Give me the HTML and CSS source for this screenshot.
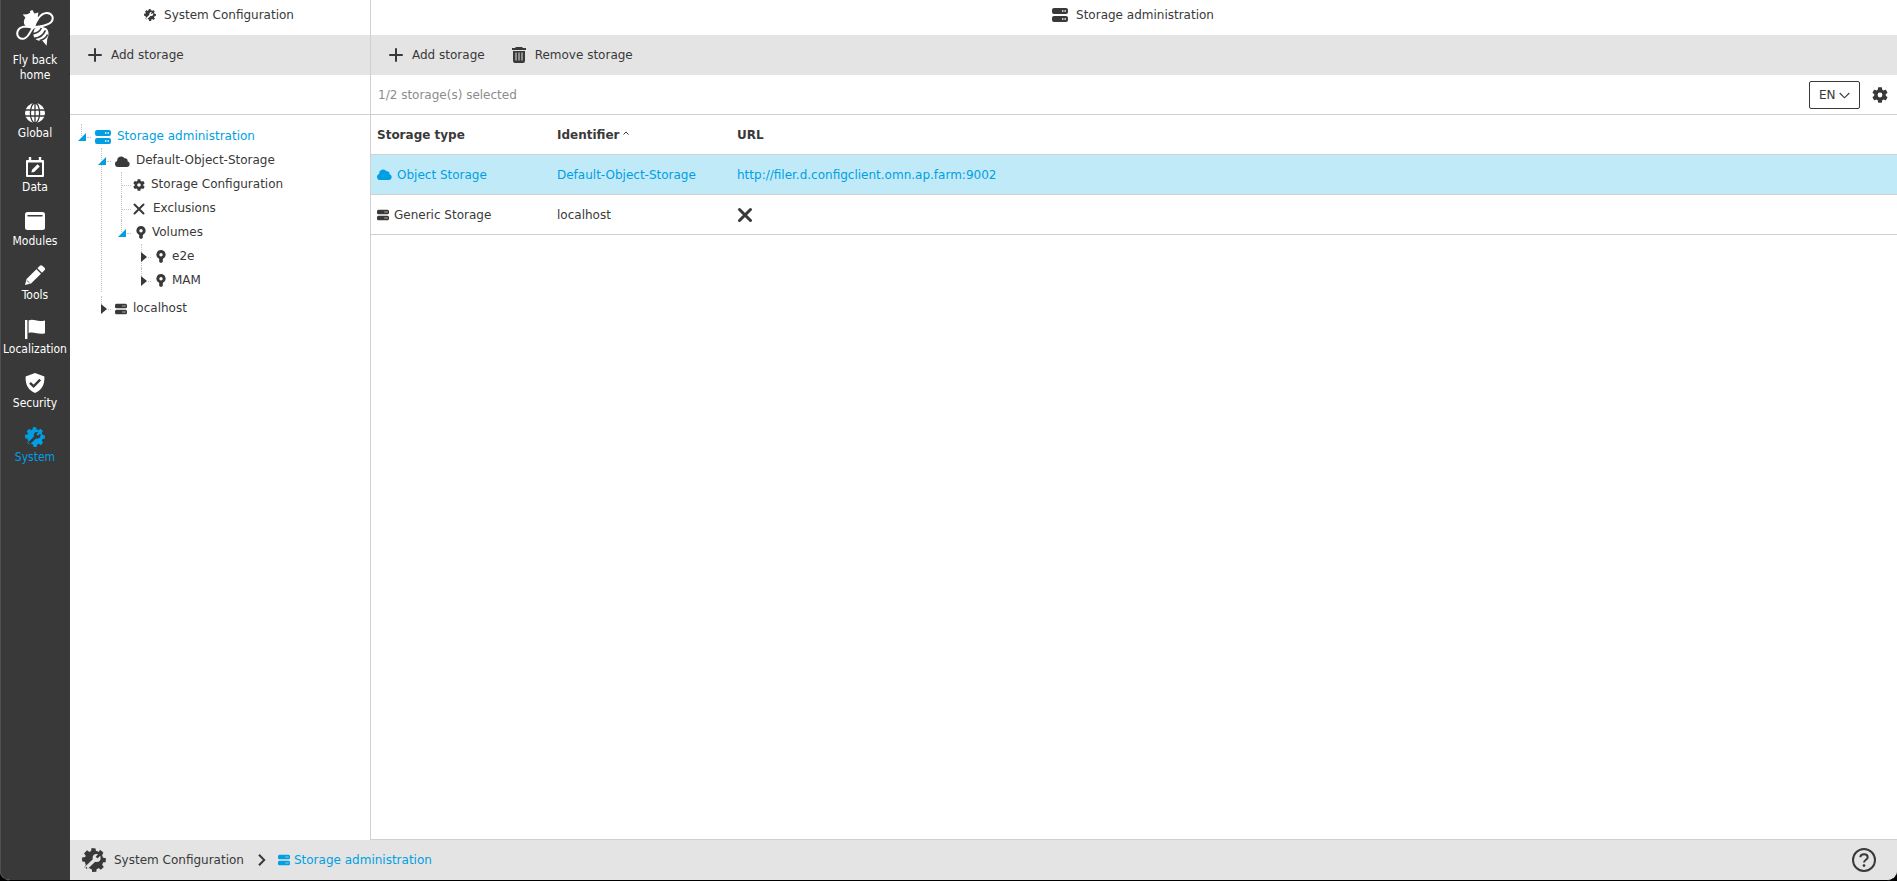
FILE: index.html
```html
<!DOCTYPE html>
<html lang="en">
<head>
    <meta charset="UTF-8">
    <title>Storage administration</title>
    <meta name="viewport" content="width=device-width, initial-scale=1.0">
    <link rel="stylesheet" href="styles.css">
</head>
<body>
    <!-- Icon sprite -->
    <svg class="sprite" aria-hidden="true">
        <defs>
            <mask id="wrench-mask">
                <rect width="24" height="24" fill="#fff"/>
                <path d="M3.6 20.6L13.6 11" stroke="#000" stroke-width="3.4" stroke-linecap="round" fill="none"/>
                <circle cx="14.6" cy="10" r="4" fill="#000"/>
                <path d="M14.6 9.6L19 5" stroke="#fff" stroke-width="2.6" fill="none"/>
                <circle cx="4.4" cy="19.9" r=".8" fill="#fff"/>
            </mask>
            <symbol id="i-system" viewBox="0 0 24 24">
                <g mask="url(#wrench-mask)">
                    <circle cx="12" cy="12" r="9.4" fill="currentColor"/>
                    <path d="M9.6 0l4 .6.4 4-5.200-.4zM18 1.800l3.400 2.800-1.600 3.400-3.600-3zM20.400 9.400l3.600.8-.4 4-3.600.2zM19.600 16l2.200 3-3 2.800-2.800-2.400zM14.600 20l-.2 3.800-4.200.2-.6-3.600zM8 19l-3.200 2.600-2.600-2.200L4.400 16zM4 14l-3.800-.6-.2-4 3.800-.4zM4.400 8.600L2 5.400 5 2.200l3 2.200z" fill="currentColor"/>
                </g>
            </symbol>
            <symbol id="i-gear" viewBox="2 2 20 20">
                <path fill="currentColor" fill-rule="evenodd" d="M19.140 12.940c.04-.3.06-.61.06-.94 0-.32-.02-.64-.07-.94l2.030-1.580c.18-.14.23-.41.12-.61l-1.920-3.320c-.12-.22-.37-.29-.59-.22l-2.390.96c-.5-.38-1.030-.7-1.620-.94l-.36-2.540c-.04-.24-.24-.41-.48-.41h-3.840c-.24 0-.43.17-.47.41l-.36 2.540c-.59.24-1.130.57-1.620.94l-2.390-.96c-.22-.08-.47 0-.59.22L2.740 8.870c-.12.21-.08.47.12.61l2.030 1.580c-.05.3-.09.63-.09.94s.02.64.07.94l-2.030 1.580c-.18.14-.23.41-.12.61l1.920 3.320c.12.22.37.29.59.22l2.390-.96c.5.38 1.030.7 1.620.94l.36 2.540c.05.24.24.41.48.41h3.840c.24 0 .44-.17.47-.41l.36-2.540c.59-.24 1.130-.56 1.620-.94l2.390.96c.22.08.47 0 .59-.22l1.920-3.320c.12-.22.07-.47-.12-.61zM12 9a3 3 0 1 0 0 6a3 3 0 1 0 0-6z"/>
            </symbol>
            <symbol id="i-storage" viewBox="0 0 16 14">
                <path fill="currentColor" fill-rule="evenodd" d="M2 0h12a2 2 0 0 1 2 2v2a2 2 0 0 1-2 2H2a2 2 0 0 1-2-2V2a2 2 0 0 1 2-2zM10 2.300v1.400h1.400V2.300zM12.500 2.300v1.400h1.400V2.300zM2 8h12a2 2 0 0 1 2 2v2a2 2 0 0 1-2 2H2a2 2 0 0 1-2-2v-2a2 2 0 0 1 2-2zM10 10.300v1.400h1.400v-1.400zM12.500 10.300v1.400h1.400v-1.400z"/>
            </symbol>
            <symbol id="i-cloud" viewBox="0 0 15 11">
                <path fill="currentColor" d="M3 11a3 3 0 0 1-.8-5.900A4 4 0 0 1 9.500 2.300 2.400 2.400 0 0 1 12.500 5.300 2.900 2.900 0 0 1 12.100 11z"/>
            </symbol>
            <symbol id="i-plus" viewBox="0 0 14 14">
                <path d="M7 1v12M1 7h12" stroke="currentColor" stroke-width="2" stroke-linecap="round"/>
            </symbol>
            <symbol id="i-cross" viewBox="0 0 12 12">
                <path d="M1.500 1.500l9 9M10.500 1.500l-9 9" stroke="currentColor" stroke-width="2" stroke-linecap="round"/>
            </symbol>
            <symbol id="i-cross-bold" viewBox="0 0 16 16">
                <path d="M2.500 2.500l11 11M13.500 2.500l-11 11" stroke="currentColor" stroke-width="3" stroke-linecap="round"/>
            </symbol>
            <symbol id="i-pin" viewBox="0 0 10 13">
                <path fill="currentColor" fill-rule="evenodd" d="M5 0a4.700 4.700 0 0 1 1.800 9v3L5 13l-1.800-1V9A4.700 4.700 0 0 1 5 0zM5 3a1.700 1.700 0 1 0 0 3.400A1.700 1.700 0 1 0 5 3z"/>
            </symbol>
            <symbol id="i-trash" viewBox="0 0 14 16">
                <path fill="currentColor" d="M4 0h6l1 1h3v2H0V1h3z"/>
                <path fill="currentColor" fill-rule="evenodd" d="M1 4h12v10a2 2 0 0 1-2 2H3a2 2 0 0 1-2-2zM3.500 5.500v8h1v-8zM6.500 5.500v8h1v-8zM9.500 5.500v8h1v-8z"/>
            </symbol>
        </defs>
    </svg>

    <div class="app">
        <nav class="sidebar">
            <a href="#" class="home">
                <svg class="bee" viewBox="0 0 38 36" fill="none">
                    <path d="M14 1l2.400-1 2 3.600 4-1-.6 4c2 3 1 6.600-.8 9l-5 3.400-7-3.600c-1.800-2.600-1.400-5.600.4-8L6.600 4.600l4.600-.4 3-1.400z" fill="#fff"/>
                    <path d="M18 17.600c2-7 6.400-14.400 12.600-14.600 5.800-.2 7.800 5.600 4.400 9.200-3.600 3.600-10.400 3.800-17 5.400z" fill="#393939" stroke="#fff" stroke-width="2"/>
                    <path d="M17 18C11 15.600 3.400 16.200 1.600 21.400c-1.600 5.200 2.800 8.600 7 7C13.400 26.400 14 21 17 18z" fill="#393939" stroke="#fff" stroke-width="2"/>
                    <path d="M19 18.400c4-2 9-2 11.600.2 2.800 3 2.200 7.400.6 10.600l-.6 6.600-4-4.800c-4 .4-8-1.800-9-5-.6-2.600 0-5.400 1.400-7.600z" fill="#fff"/>
                    <path d="M17 23.600c4-.4 7-2.600 8.400-5.600M18.400 28.400c5-.6 9.400-4 11-8M23.600 30.600c4-1 6.600-3 8-6" stroke="#393939" stroke-width="1.600"/>
                </svg>
                <span>Fly back home</span>
            </a>
            <a href="#" class="nav-item">
                <svg viewBox="0 0 20 20" fill="none">
                    <circle cx="10" cy="10" r="10" fill="#fff"/>
                    <path d="M0 7h20M0 13h20M10 0v20" stroke="#393939" stroke-width="1.300"/>
                    <ellipse cx="10" cy="10" rx="4.600" ry="10" stroke="#393939" stroke-width="1.300"/>
                </svg>
                <span>Global</span>
            </a>
            <a href="#" class="nav-item">
                <svg viewBox="0 0 20 20" fill="none">
                    <path d="M2 4h16v15H2z" stroke="#fff" stroke-width="2" stroke-linejoin="round"/>
                    <path d="M2 4.400h16M5 0v4M15 0v4" stroke="#fff" stroke-width="2.400"/>
                    <path d="M6.400 15.600l.6-2.800 5.600-5.600 2.200 2.200-5.600 5.600z" fill="#fff"/>
                </svg>
                <span>Data</span>
            </a>
            <a href="#" class="nav-item">
                <svg viewBox="0 0 20 20" fill="none">
                    <rect y="1" width="20" height="18" rx="2.500" fill="#fff"/>
                    <path d="M3 4.700h14" stroke="#393939" stroke-width="1.400" stroke-linecap="round"/>
                </svg>
                <span>Modules</span>
            </a>
            <a href="#" class="nav-item">
                <svg viewBox="0 0 20 20">
                    <path d="M0 20l1.600-6L11.400 4.200l4.600 4.600L6 18.600zM12.400 3.200l2.200-2.200a2 2 0 0 1 3 0l1.600 1.600a2 2 0 0 1 0 3L17 7.800z" fill="#fff"/>
                    <path d="M2 15.600L4.600 18" stroke="#393939" stroke-width=".8"/>
                </svg>
                <span>Tools</span>
            </a>
            <a href="#" class="nav-item">
                <svg viewBox="0 0 20 20">
                    <path d="M0 1h2.400v19H0zM3.600 1.600c5-2.400 8 2 16.400-.2v12.800c-6 2-11-2-16.400-.2z" fill="#fff"/>
                </svg>
                <span>Localization</span>
            </a>
            <a href="#" class="nav-item">
                <svg viewBox="0 0 20 20" fill="none">
                    <path d="M10 0l9.400 3.600c.4 8-2.400 13.400-9.400 16.400C3 17 .2 11.600.6 3.600z" fill="#fff"/>
                    <path d="M5 9.800l3.600 3.600 6.600-6.800" stroke="#393939" stroke-width="2.400"/>
                </svg>
                <span>Security</span>
            </a>
            <a href="#" class="nav-item active">
                <svg><use href="#i-system"/></svg>
                <span>System</span>
            </a>
        </nav>

        <div class="workspace">
            <div class="panels">
                <section class="panel tree-panel">
                    <h2 class="panel-title">
                        <svg class="icon-12"><use href="#i-system"/></svg>
                        System Configuration
                    </h2>
                    <div class="toolbar">
                        <button class="tool-button"><svg class="icon-14"><use href="#i-plus"/></svg>Add storage</button>
                    </div>
                    <div class="info-bar"></div>
                    <ul class="tree">
                        <li>
                            <div class="node active">
                                <button class="toggle open" aria-label="Collapse"></button>
                                <svg class="tree-storage"><use href="#i-storage"/></svg>
                                <a href="#">Storage administration</a>
                            </div>
                            <ul>
                                <li>
                                    <div class="node">
                                        <button class="toggle open" aria-label="Collapse"></button>
                                        <svg class="tree-cloud"><use href="#i-cloud"/></svg>
                                        <a href="#">Default-Object-Storage</a>
                                    </div>
                                    <ul class="subtree">
                                        <li>
                                            <div class="node">
                                                <span class="toggle leaf"></span>
                                                <svg class="tree-gear"><use href="#i-gear"/></svg>
                                                <a href="#">Storage Configuration</a>
                                            </div>
                                        </li>
                                        <li>
                                            <div class="node">
                                                <span class="toggle leaf"></span>
                                                <svg class="tree-cross"><use href="#i-cross"/></svg>
                                                <a href="#">Exclusions</a>
                                            </div>
                                        </li>
                                        <li>
                                            <div class="node">
                                                <button class="toggle open" aria-label="Collapse"></button>
                                                <svg class="tree-pin"><use href="#i-pin"/></svg>
                                                <a href="#">Volumes</a>
                                            </div>
                                            <ul>
                                                <li>
                                                    <div class="node">
                                                        <button class="toggle closed" aria-label="Expand"></button>
                                                        <svg class="tree-pin"><use href="#i-pin"/></svg>
                                                        <a href="#">e2e</a>
                                                    </div>
                                                </li>
                                                <li>
                                                    <div class="node">
                                                        <button class="toggle closed" aria-label="Expand"></button>
                                                        <svg class="tree-pin"><use href="#i-pin"/></svg>
                                                        <a href="#">MAM</a>
                                                    </div>
                                                </li>
                                            </ul>
                                        </li>
                                    </ul>
                                </li>
                                <li>
                                    <div class="node">
                                        <button class="toggle closed" aria-label="Expand"></button>
                                        <svg class="tree-host"><use href="#i-storage"/></svg>
                                        <a href="#">localhost</a>
                                    </div>
                                </li>
                            </ul>
                        </li>
                    </ul>
                </section>

                <main class="panel main-panel">
                    <h2 class="panel-title">
                        <svg class="icon-16"><use href="#i-storage"/></svg>
                        Storage administration
                    </h2>
                    <div class="toolbar">
                        <button class="tool-button"><svg class="icon-14"><use href="#i-plus"/></svg>Add storage</button>
                        <button class="tool-button"><svg class="icon-trash"><use href="#i-trash"/></svg>Remove storage</button>
                    </div>
                    <div class="info-bar">
                        <span class="selection">1/2 storage(s) selected</span>
                        <div class="language">
                            <select aria-label="Language">
                                <option>EN</option>
                            </select>
                            <svg viewBox="0 0 11 7" fill="none"><path d="M.7 1l4.800 4.800L10.300 1" stroke="currentColor" stroke-width="1.100"/></svg>
                        </div>
                        <button class="icon-button" aria-label="Settings"><svg><use href="#i-gear"/></svg></button>
                    </div>
                    <table class="grid">
                        <thead>
                            <tr>
                                <th class="col">Storage type</th>
                                <th class="col">Identifier<svg class="sort" viewBox="0 0 6 4" fill="none"><path d="M.5 3.500L3 1l2.500 2.500" stroke="currentColor"/></svg></th>
                                <th>URL</th>
                            </tr>
                        </thead>
                        <tbody>
                            <tr class="selected">
                                <td><div class="cell"><svg class="cell-cloud"><use href="#i-cloud"/></svg>Object Storage</div></td>
                                <td>Default-Object-Storage</td>
                                <td>http://filer.d.configclient.omn.ap.farm:9002</td>
                            </tr>
                            <tr>
                                <td><div class="cell"><svg class="cell-host"><use href="#i-storage"/></svg>Generic Storage</div></td>
                                <td>localhost</td>
                                <td><div class="cell"><svg class="cell-cross"><use href="#i-cross-bold"/></svg></div></td>
                            </tr>
                        </tbody>
                    </table>
                </main>
            </div>

            <footer class="footer">
                <svg class="footer-system"><use href="#i-system"/></svg>
                <a href="#">System Configuration</a>
                <svg class="separator" viewBox="0 0 8 12" fill="none"><path d="M1 .8L6.200 6 1 11.200" stroke="currentColor" stroke-width="2"/></svg>
                <a href="#" class="current"><svg class="footer-host"><use href="#i-storage"/></svg>Storage administration</a>
                <button class="icon-button help" aria-label="Help">
                    <svg viewBox="0 0 24 24" fill="none">
                        <circle cx="12" cy="12" r="11" stroke="currentColor" stroke-width="2"/>
                        <path d="M8.300 9.200c.2-4 7.400-4 7.400 0 0 2.600-3.500 2.400-3.700 5.300" stroke="currentColor" stroke-width="2"/>
                        <circle cx="12" cy="17.600" r="1.400" fill="currentColor"/>
                    </svg>
                </button>
            </footer>
        </div>
    </div>
</body>
</html>
```
FILE: styles.css
```css
:root {
    --dark: #393939;
    --accent: #009fe3;
    --bar: #e4e4e4;
    --line: #d0d0d0;
    --muted: #8c8c8c;
    --selected: #c0eaf8;
}

* {
    box-sizing: border-box;
    margin: 0;
    padding: 0;
}

body {
    font-family: 'DejaVu Sans', sans-serif;
    font-size: 12px;
    line-height: 16px;
    color: var(--dark);
    background-color: #000;
}

a {
    color: inherit;
    text-decoration: none;
}

ul {
    list-style: none;
}

svg {
    display: block;
    flex: none;
}

button,
select {
    font: inherit;
    color: inherit;
    background: none;
    border: none;
    cursor: pointer;
}

.sprite {
    position: absolute;
    width: 0;
    height: 0;
}

.app {
    display: flex;
    height: 100vh;
    background-color: #fff;
    border-bottom: 1px solid #000;
    border-radius: 0 0 10px 10px;
    overflow: hidden;
}

/* Sidebar */
.sidebar {
    flex: none;
    width: 70px;
    padding: 10px 1px 0 0;
    display: flex;
    flex-direction: column;
    align-items: center;
    gap: 16px;
    background-color: var(--dark);
    border-left: 1px solid #505050;
    color: #fff;
    font-family: 'DejaVu Sans Condensed', 'DejaVu Sans', sans-serif;
    line-height: 15px;
    text-align: center;
}

.home {
    width: 60px;
    margin-bottom: 4px;
    display: flex;
    flex-direction: column;
    align-items: center;
    gap: 7px;
}

.bee {
    width: 38px;
    height: 36px;
}

.nav-item {
    display: flex;
    flex-direction: column;
    align-items: center;
    gap: 3px;
}

.nav-item svg {
    width: 20px;
    height: 20px;
}

.nav-item.active {
    color: var(--accent);
}

/* Panels */
.workspace {
    flex: 1;
    min-width: 0;
    display: flex;
    flex-direction: column;
}

.panels {
    flex: 1;
    min-height: 0;
    display: flex;
}

.tree-panel {
    flex: none;
    width: 300px;
}

.main-panel {
    flex: 1;
    min-width: 0;
    border-left: 1px solid var(--line);
    border-bottom: 1px solid var(--line);
}

.panel-title {
    height: 35px;
    padding: 0 2px 5px 0;
    display: flex;
    align-items: center;
    justify-content: center;
    gap: 8px;
    font-size: 12px;
    font-weight: normal;
}

.icon-12 {
    width: 12px;
    height: 12px;
}

.icon-14 {
    width: 14px;
    height: 14px;
}

.icon-16 {
    width: 16px;
    height: 16px;
}

.icon-trash {
    width: 14px;
    height: 16px;
}

.toolbar {
    height: 40px;
    padding: 0 8px;
    display: flex;
    align-items: center;
    gap: 7px;
    background-color: var(--bar);
}

.tool-button {
    height: 32px;
    padding: 0 10px;
    display: flex;
    align-items: center;
    gap: 9px;
}

.info-bar {
    height: 40px;
    padding: 0 9px 0 7px;
    display: flex;
    align-items: center;
    gap: 12px;
    border-bottom: 1px solid var(--line);
}

.selection {
    flex: 1;
    color: var(--muted);
}

.language {
    position: relative;
}

.language select {
    display: block;
    width: 51px;
    height: 28px;
    padding: 0 9px;
    appearance: none;
    border: 1px solid var(--dark);
    border-radius: 2px;
}

.language svg {
    position: absolute;
    top: 11px;
    right: 10px;
    width: 11px;
    height: 7px;
    pointer-events: none;
}

.icon-button svg {
    width: 16px;
    height: 16px;
}

/* Tree */
.tree {
    padding: 9px 8px;
}

.tree ul {
    padding-left: 20px;
}

.tree .subtree {
    margin-bottom: 4px;
}

.tree li {
    position: relative;
}

/* dotted guide from the top of a branch down to each node */
.tree li::before {
    content: '';
    position: absolute;
    top: 0;
    left: 3px;
    height: 12px;
    border-left: 1px dotted #c4c4c4;
}

.tree li:not(:last-child)::before {
    height: 100%;
}

.node {
    height: 24px;
    display: flex;
    align-items: center;
}

.node.active {
    color: var(--accent);
}

.toggle {
    position: relative;
    flex: none;
    width: 15px;
    height: 16px;
    display: flex;
    align-items: center;
}

.toggle::before {
    content: '';
}

.toggle::after {
    content: '';
    flex: 1;
    margin: 3px 2px 0 1px;
    border-top: 1px dotted #c4c4c4;
}

.toggle.open::before {
    margin-top: 2px;
    border-left: 8px solid transparent;
    border-bottom: 8px solid var(--accent);
}

.toggle.closed::before {
    margin: 2px 0 0 3px;
    border-left: 6px solid var(--dark);
    border-top: 5px solid transparent;
    border-bottom: 5px solid transparent;
}

.toggle.leaf::before {
    margin-left: 3px;
}

.tree-storage {
    width: 16px;
    height: 14px;
    margin: 2px 6px 0 2px;
}

.tree-cloud {
    width: 15px;
    height: 11px;
    margin: 2px 6px 0 2px;
}

.tree-gear {
    width: 12px;
    height: 12px;
    margin: 1px 6px 0 0;
}

.tree-cross {
    width: 12px;
    height: 12px;
    margin: 1px 8px 0 0;
}

.tree-pin {
    width: 10px;
    height: 13px;
    margin: 1px 6px 0 3px;
}

.tree-host {
    width: 12px;
    height: 12px;
    margin: 1px 6px 0 2px;
}

/* Table */
.grid {
    width: 100%;
    border-collapse: separate;
    border-spacing: 0;
    table-layout: fixed;
}

.grid .col {
    width: 180px;
}

.grid th,
.grid td {
    height: 40px;
    padding: 0 6px;
    text-align: left;
    border-bottom: 1px solid var(--line);
}

.grid .selected {
    color: var(--accent);
    background-color: var(--selected);
}

.sort {
    display: inline-block;
    width: 6px;
    height: 4px;
    margin-left: 3px;
    vertical-align: 4px;
}

.cell {
    display: flex;
    align-items: center;
    gap: 5px;
}

.cell-cloud {
    width: 15px;
    height: 11px;
}

.cell-host {
    width: 12px;
    height: 12px;
}

.cell-cross {
    width: 16px;
    height: 16px;
}

/* Footer */
.footer {
    flex: none;
    height: 40px;
    padding: 0 21px 0 12px;
    display: flex;
    align-items: center;
    background-color: var(--bar);
}

.footer-system {
    width: 24px;
    height: 24px;
    margin-right: 8px;
}

.separator {
    width: 8px;
    height: 12px;
    margin: 0 12px 0 14px;
}

.current {
    display: flex;
    align-items: center;
    gap: 4px;
    color: var(--accent);
}

.footer-host {
    width: 12px;
    height: 12px;
}

.help {
    margin-left: auto;
}

.help svg {
    width: 24px;
    height: 24px;
}
```
